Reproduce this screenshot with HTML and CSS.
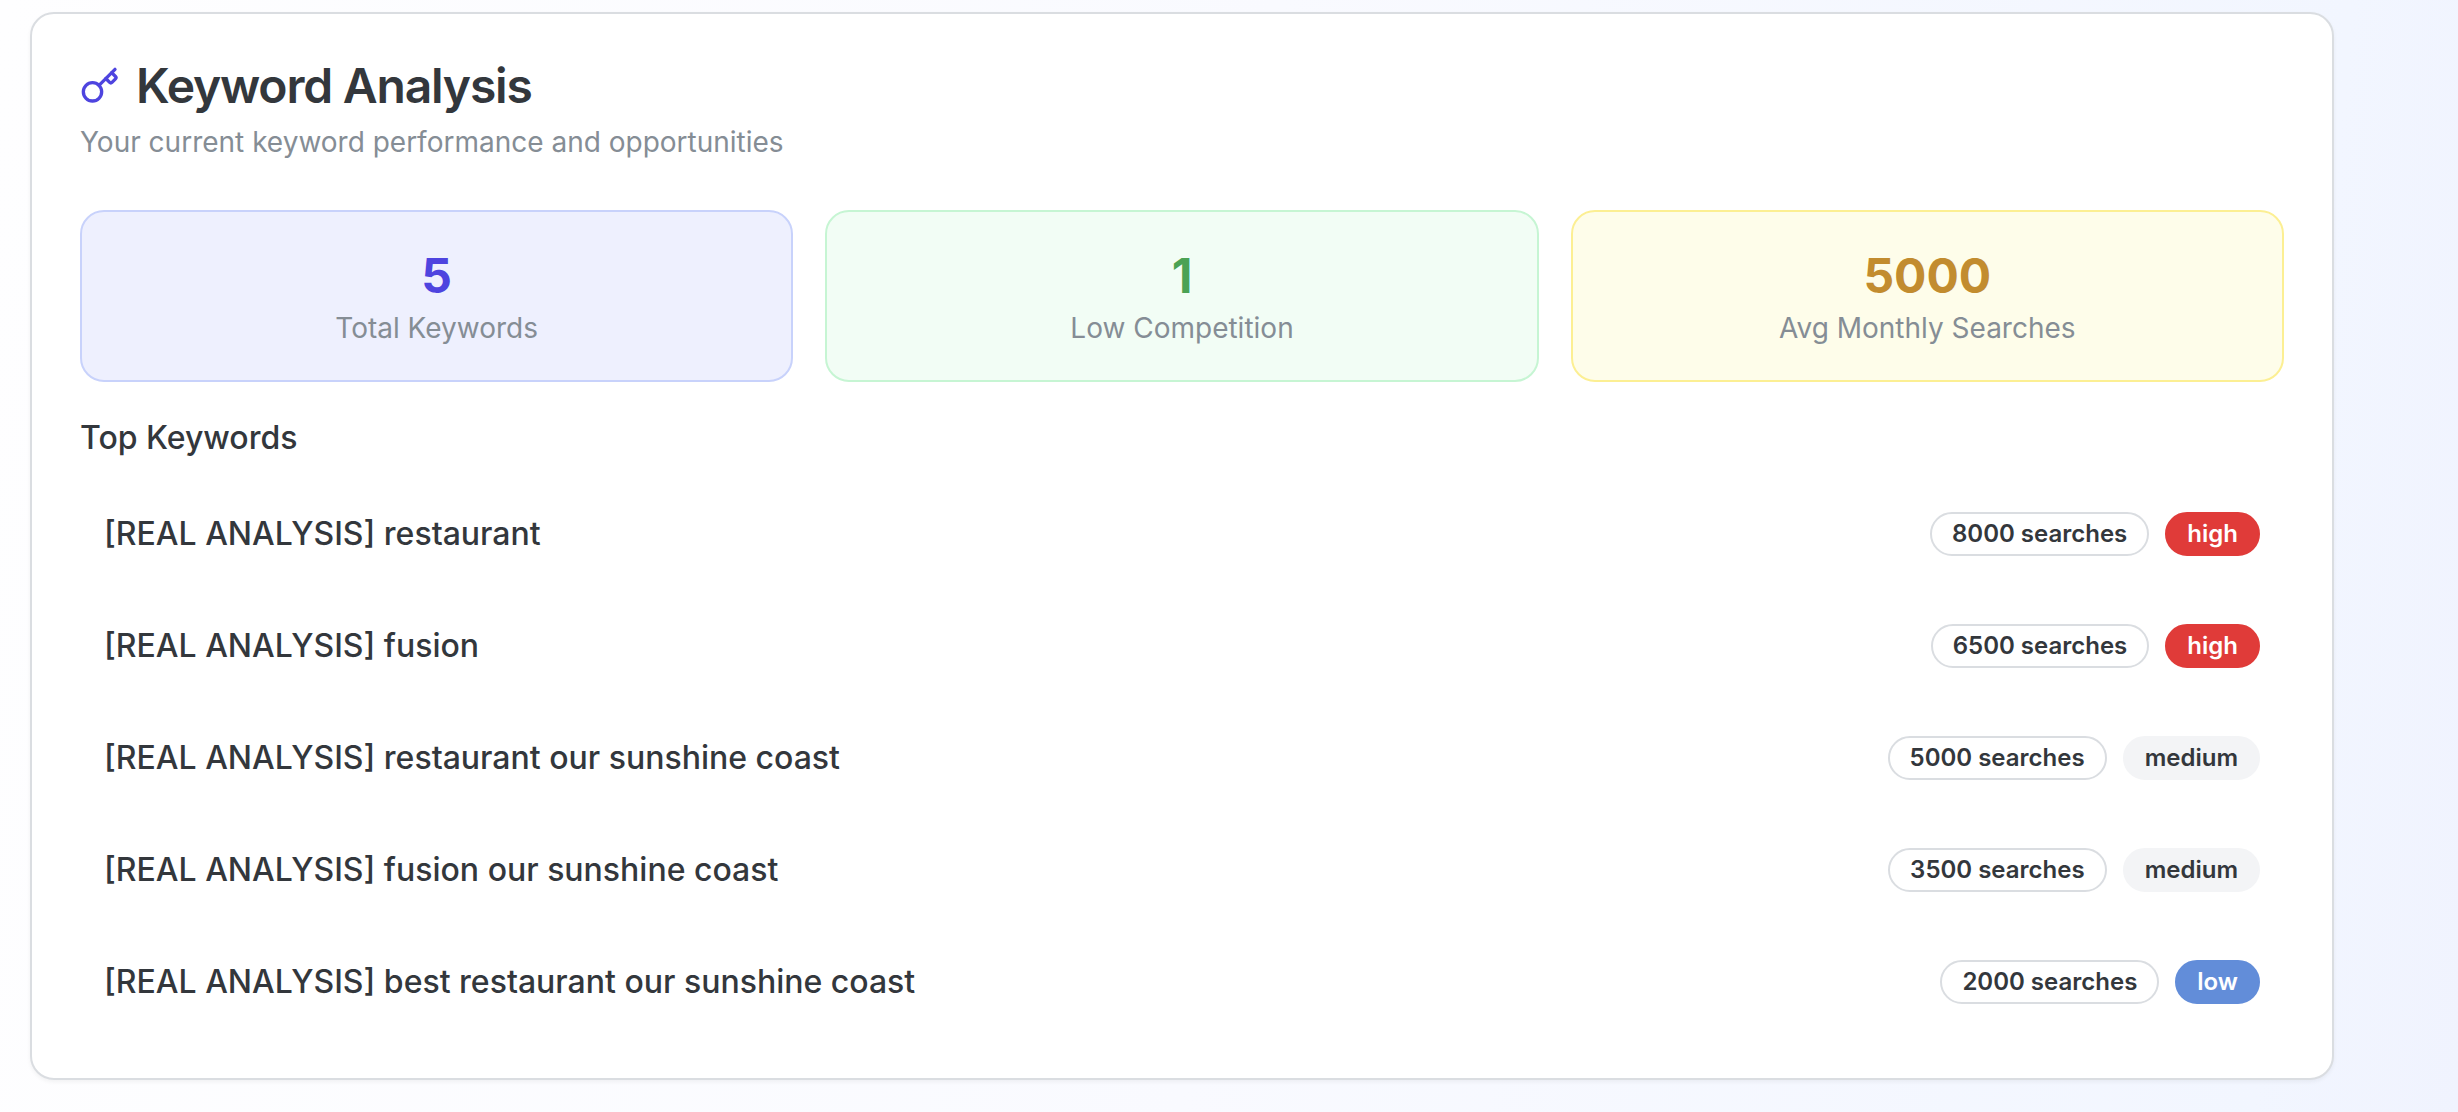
FILE: index.html
```html
<!DOCTYPE html>
<html lang="en">
<head>
  <meta charset="utf-8">
  <meta name="viewport" content="width=device-width, initial-scale=1">
  <title>Keyword Analysis</title>
  <link rel="stylesheet" href="styles.css">
</head>
<body>
  <main class="page">
    <section class="card">
      <header class="card-header">
        <h1 class="card-title">
          <svg class="card-icon" viewBox="0 0 24 24" aria-hidden="true">
            <path d="m15.5 7.5 2.3 2.3a1 1 0 0 0 1.4 0l2.1-2.1a1 1 0 0 0 0-1.4L19 4"/>
            <path d="m21 2-9.6 9.6"/>
            <circle cx="7.5" cy="15.5" r="5.5"/>
          </svg>
          Keyword Analysis
        </h1>
        <p class="card-description">Your current keyword performance and opportunities</p>
      </header>

      <div class="stats">
        <div class="stat stat-indigo">
          <div class="stat-value">5</div>
          <div class="stat-label">Total Keywords</div>
        </div>
        <div class="stat stat-green">
          <div class="stat-value">1</div>
          <div class="stat-label">Low Competition</div>
        </div>
        <div class="stat stat-yellow">
          <div class="stat-value">5000</div>
          <div class="stat-label">Avg Monthly Searches</div>
        </div>
      </div>

      <h2 class="list-title">Top Keywords</h2>
      <ul class="keywords">
        <li class="keyword">
          <span class="keyword-name">[REAL ANALYSIS] restaurant</span>
          <span class="badges"><span class="badge badge-outline">8000 searches</span><span class="badge badge-high">high</span></span>
        </li>
        <li class="keyword">
          <span class="keyword-name">[REAL ANALYSIS] fusion</span>
          <span class="badges"><span class="badge badge-outline">6500 searches</span><span class="badge badge-high">high</span></span>
        </li>
        <li class="keyword">
          <span class="keyword-name">[REAL ANALYSIS] restaurant our sunshine coast</span>
          <span class="badges"><span class="badge badge-outline">5000 searches</span><span class="badge badge-medium">medium</span></span>
        </li>
        <li class="keyword">
          <span class="keyword-name">[REAL ANALYSIS] fusion our sunshine coast</span>
          <span class="badges"><span class="badge badge-outline">3500 searches</span><span class="badge badge-medium">medium</span></span>
        </li>
        <li class="keyword">
          <span class="keyword-name">[REAL ANALYSIS] best restaurant our sunshine coast</span>
          <span class="badges"><span class="badge badge-outline">2000 searches</span><span class="badge badge-low">low</span></span>
        </li>
      </ul>
    </section>
  </main>
</body>
</html>
```
FILE: styles.css
```css
*,
*::before,
*::after {
  box-sizing: border-box;
}

body {
  margin: 0;
  min-height: 100vh;
  background: linear-gradient(95deg, #fefeff, #f9faff 50%, #f2f6ff 92%, #f0f3fe);
  color: #33373c;
  font-family: Inter, "Liberation Sans", sans-serif;
  font-optical-sizing: none;
  font-size: 32px;
  line-height: 48px;
}

h1,
h2,
p,
ul {
  margin: 0;
  padding: 0;
}

.page {
  padding: 12px 124px 28px 30px;
}

.card {
  padding: 48px;
  border: 2px solid #dadde1;
  border-radius: 24px;
  background: #ffffff;
  box-shadow: 0 2px 4px rgba(0, 0, 0, 0.05);
}

.card-header {
  display: flex;
  flex-direction: column;
  gap: 12px;
  margin-bottom: 48px;
}

.card-title {
  display: flex;
  align-items: center;
  gap: 16px;
  font-size: 48px;
  font-weight: 600;
  line-height: 48px;
  letter-spacing: -0.025em;
}

.card-icon {
  width: 40px;
  height: 40px;
  fill: none;
  stroke: #4e44df;
  stroke-width: 2;
  stroke-linecap: round;
  stroke-linejoin: round;
}

.card-description,
.stat-label {
  color: #858d95;
  font-size: 28px;
  line-height: 40px;
}

.stats {
  display: grid;
  grid-template-columns: repeat(3, 1fr);
  gap: 32px;
  margin-bottom: 32px;
}

.stat {
  padding: 32px;
  border: 2px solid;
  border-radius: 24px;
  text-align: center;
}

.stat-value {
  font-size: 48px;
  font-weight: 700;
  line-height: 64px;
}

.stat-indigo {
  background: #eef0fe;
  border-color: #c8d2fb;
}

.stat-indigo .stat-value {
  color: #4e44df;
}

.stat-green {
  background: #f2fdf5;
  border-color: #c6f5d3;
}

.stat-green .stat-value {
  color: #4ba254;
}

.stat-yellow {
  background: #fefdea;
  border-color: #fcef93;
}

.stat-yellow .stat-value {
  color: #c28c2f;
}

.list-title {
  margin-bottom: 24px;
  font-size: 32px;
  font-weight: 500;
  line-height: 48px;
}

.keywords {
  display: flex;
  flex-direction: column;
  gap: 16px;
  list-style: none;
}

.keyword {
  display: flex;
  align-items: center;
  justify-content: space-between;
  padding: 24px;
}

.keyword-name {
  font-weight: 500;
}

.badges {
  display: flex;
  gap: 16px;
}

.badge {
  padding: 4px 20px;
  border: 2px solid transparent;
  border-radius: 22px;
  font-size: 24px;
  font-weight: 600;
  line-height: 32px;
  white-space: nowrap;
}

.badge-outline {
  border-color: #dadde1;
}

.badge-high {
  background: #e03b39;
  border-color: #e03b39;
  color: #ffffff;
}

.badge-medium {
  background: #f3f4f6;
  border-color: #f3f4f6;
}

.badge-low {
  background: #628dd9;
  border-color: #628dd9;
  color: #ffffff;
}
```
